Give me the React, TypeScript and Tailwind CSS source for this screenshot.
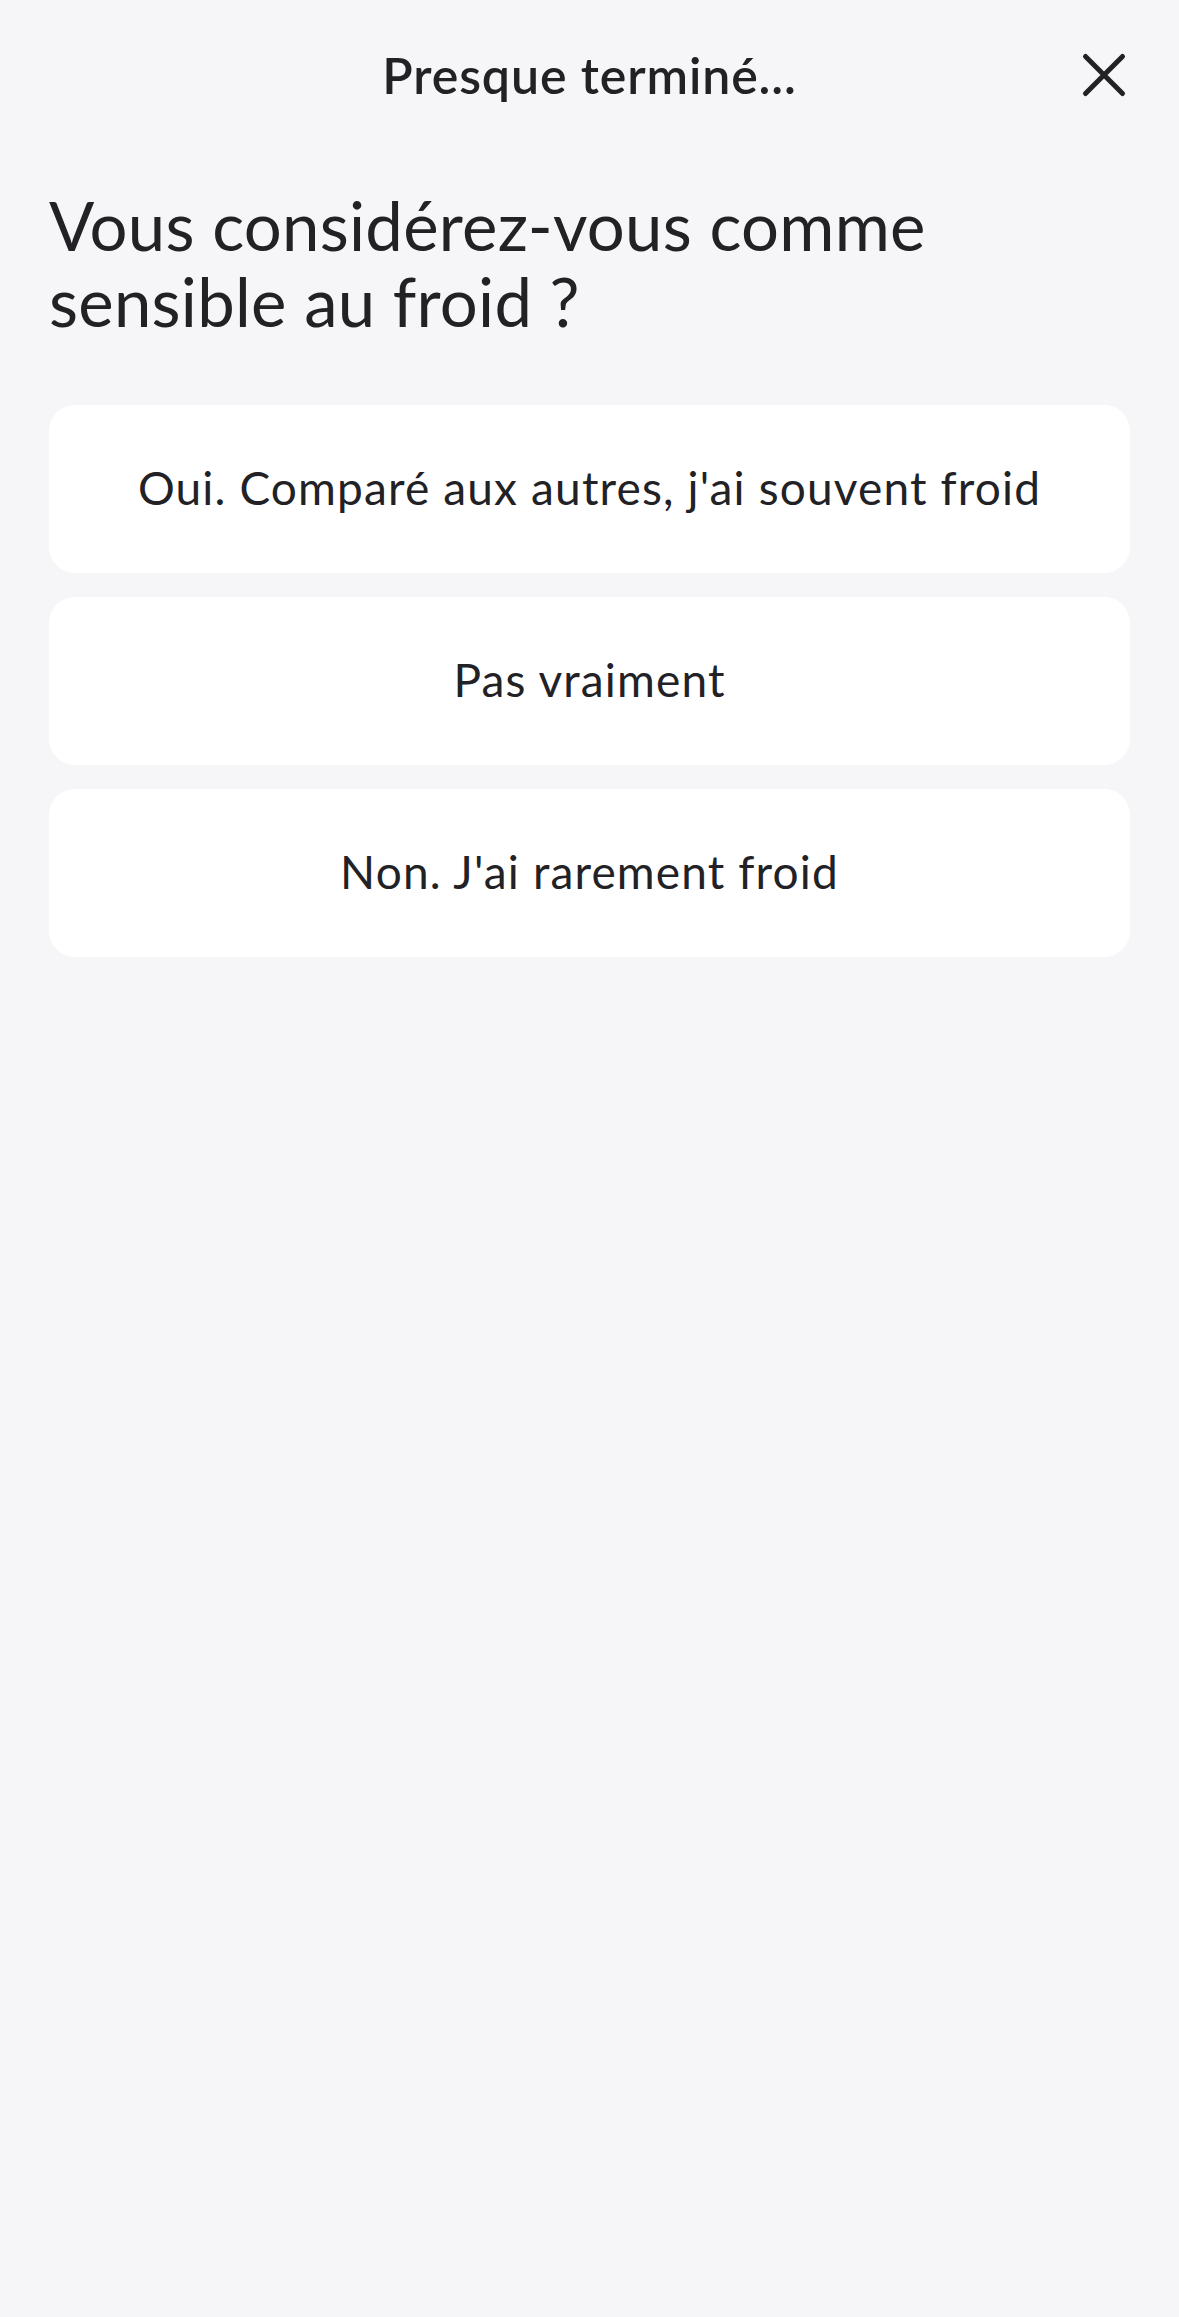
const options = [
  "Oui. Comparé aux autres, j'ai souvent froid",
  'Pas vraiment',
  "Non. J'ai rarement froid",
];

const CloseIcon: React.FC = () => (
  <svg width="50" height="50" viewBox="0 0 50 50" fill="none" aria-hidden>
    <path
      d="M6.5 6.5 43.5 43.5M43.5 6.5 6.5 43.5"
      stroke="#222226"
      strokeWidth="5"
      strokeLinecap="round"
    />
  </svg>
);

const OptionCard: React.FC<{ label: string }> = ({ label }) => (
  <button className="flex h-[168px] w-full items-center justify-center rounded-[26px] bg-white pb-[3px] text-[46px] tracking-[0.025em] text-[#222226]">
    {label}
  </button>
);

export default function App() {
  return (
    <div
      className="min-h-[2317px] w-full bg-[#f6f5f8] text-[#222226]"
      style={{ fontFamily: 'Lato, "Noto Sans", sans-serif' }}
    >
      <header className="grid h-[150px] grid-cols-[1fr_auto_1fr] items-center">
        <div />
        <h2 className="text-[50px] font-semibold tracking-[0.018em]">
          Presque terminé...
        </h2>
        <div className="flex justify-end pr-[50px]">
          <CloseIcon />
        </div>
      </header>

      <h1 className="mt-[37px] px-[49px] text-[67px] leading-[76px] tracking-[0.004em]">
        Vous considérez-vous comme
        <br />
        sensible au froid ?
      </h1>

      <div className="mt-[66px] flex flex-col gap-[24px] px-[49px]">
        {options.map((o) => (
          <OptionCard key={o} label={o} />
        ))}
      </div>
    </div>
  );
}
